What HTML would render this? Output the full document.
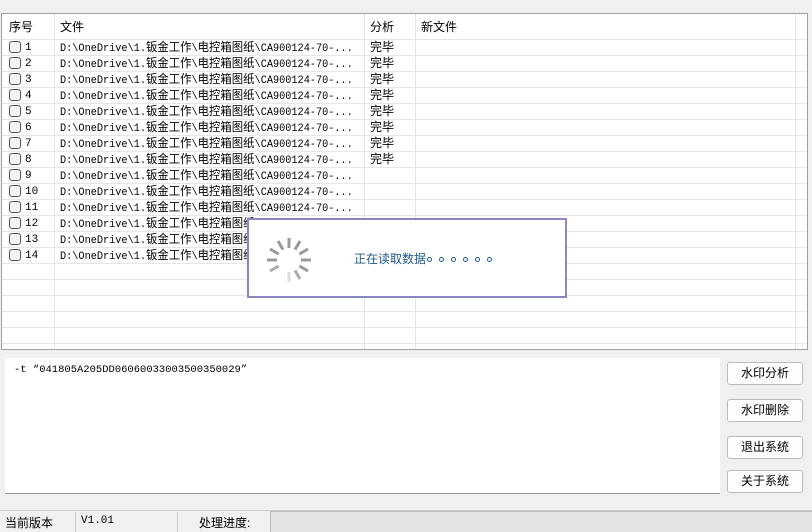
<!DOCTYPE html>
<html><head><meta charset="utf-8"><style>
*{margin:0;padding:0;box-sizing:border-box}
body{width:812px;height:532px;background:#f0f0f0;position:relative;overflow:hidden;font-family:"Liberation Sans","Noto Sans CJK SC",sans-serif;font-size:12px;color:#000}
.a{position:absolute}
#grid{left:1px;top:13px;width:807px;height:337px;background:#fff;border:1px solid #a0a0a0}
.vl{position:absolute;top:0;bottom:0;width:1px;background:#e6e6e6}
.hl{position:absolute;left:0;right:0;height:1px;background:#e6e6e6}
.row{position:absolute;left:0;height:16px;line-height:16px;white-space:nowrap}
.cb{position:absolute;left:7px;top:2px;width:12px;height:12px;border:1px solid #555;border-radius:3px;background:#f4f4f4}
.num{position:absolute;left:23px;top:1px;line-height:16px;font-family:"Liberation Mono",monospace;font-size:11px}
.path{position:absolute;left:58px;top:0;font-family:"Liberation Mono","Noto Sans CJK SC",monospace;font-size:10.8px;transform:scaleX(0.948);transform-origin:0 0}
.path b{font-weight:normal;font-family:"Noto Sans CJK SC",sans-serif;font-size:12px}
.done{position:absolute;left:368px;top:0}
.btn{position:absolute;left:727px;width:76px;height:23px;border:1px solid #bcbcbc;border-radius:3px;background:#fdfdfd;text-align:center;line-height:21px;font-size:12px}
.dot{display:inline-block;width:5px;height:5px;border:1px solid #1e5a8a;border-radius:50%;margin-left:7px;vertical-align:1px}
</style></head><body>
<div id="grid" class="a">
<div class="vl" style="left:52px"></div>
<div class="vl" style="left:362px"></div>
<div class="vl" style="left:413px"></div>
<div class="vl" style="left:793px"></div>
<div class="hl" style="top:25px"></div>
<div class="a" style="left:7px;top:4px">序号</div>
<div class="a" style="left:58px;top:4px">文件</div>
<div class="a" style="left:368px;top:4px">分析</div>
<div class="a" style="left:419px;top:4px">新文件</div>
<div id="rows"></div>
</div>
<div class="a" style="left:247px;top:218px;width:320px;height:80px;background:#fff;border:2px solid #8a86c0">
<svg class="a" style="left:14px;top:14px" width="52" height="52" viewBox="0 0 52 52">
<g stroke-width="3" stroke-linecap="butt">
<line x1="26" y1="4" x2="26" y2="14" stroke="#999"/>
<line x1="37" y1="7" x2="32" y2="15.6" stroke="#999"/>
<line x1="45" y1="15" x2="36.4" y2="20" stroke="#999"/>
<line x1="48" y1="26" x2="38" y2="26" stroke="#999"/>
<line x1="45" y1="37" x2="36.4" y2="32" stroke="#999"/>
<line x1="37" y1="45" x2="32" y2="36.4" stroke="#aaa"/>
<line x1="26" y1="48" x2="26" y2="38" stroke="#ddd"/>
<line x1="7" y1="37" x2="15.6" y2="32" stroke="#aaa"/>
<line x1="4" y1="26" x2="14" y2="26" stroke="#999"/>
<line x1="7" y1="15" x2="15.6" y2="20" stroke="#999"/>
<line x1="15" y1="7" x2="20" y2="15.6" stroke="#999"/>
</g></svg>
<div class="a" style="left:105px;top:30px;color:#1e5a8a;font-size:12px;white-space:nowrap">正在读取数据<span class="dot" style="margin-left:1px"></span><span class="dot"></span><span class="dot"></span><span class="dot"></span><span class="dot"></span><span class="dot"></span></div>
</div>
<div class="a" style="left:5px;top:358px;width:715px;height:136px;background:#fff;border-bottom:1px solid #999"></div>
<div class="a" style="left:14px;top:364px;font-family:'Liberation Mono','Noto Sans CJK SC',monospace;font-size:10.5px;white-space:nowrap">-t “041805A205DD06060033003500350029”</div>
<div class="btn" style="top:362px">水印分析</div>
<div class="btn" style="top:399px">水印删除</div>
<div class="btn" style="top:436px">退出系统</div>
<div class="btn" style="top:470px">关于系统</div>
<div class="a" style="left:0;top:510px;width:812px;height:1px;background:#ccc"></div>
<div class="a" style="left:5px;top:514px">当前版本</div>
<div class="a" style="left:75px;top:512px;width:1px;height:20px;background:#ccc"></div>
<div class="a" style="left:81px;top:515px;font-family:'Liberation Mono',monospace;font-size:11px">V1.01</div>
<div class="a" style="left:177px;top:512px;width:1px;height:20px;background:#ccc"></div>
<div class="a" style="left:199px;top:514px">处理进度:</div>
<div class="a" style="left:270px;top:511px;width:542px;height:21px;background:#e4e4e4;border-left:1px solid #bbb;border-top:1px solid #bbb"></div>
<script>
var h='';
for(var i=0;i<20;i++){var t=25+16*(i+1);if(t<335)h+='<div class="hl" style="top:'+t+'px"></div>';}
for(var i=1;i<=14;i++){var t=25+16*(i-1);
h+='<div class="row" style="top:'+t+'px;width:800px"><div class="cb"></div><div class="num">'+i+'</div><div class="path">D:\\OneDrive\\1.<b>钣金工作</b>\\<b>电控箱图纸</b>\\CA900124-70-...</div>'+(i<=8?'<div class="done">完毕</div>':'')+'</div>';}
document.getElementById('rows').innerHTML=h;
</script>
</body></html>
